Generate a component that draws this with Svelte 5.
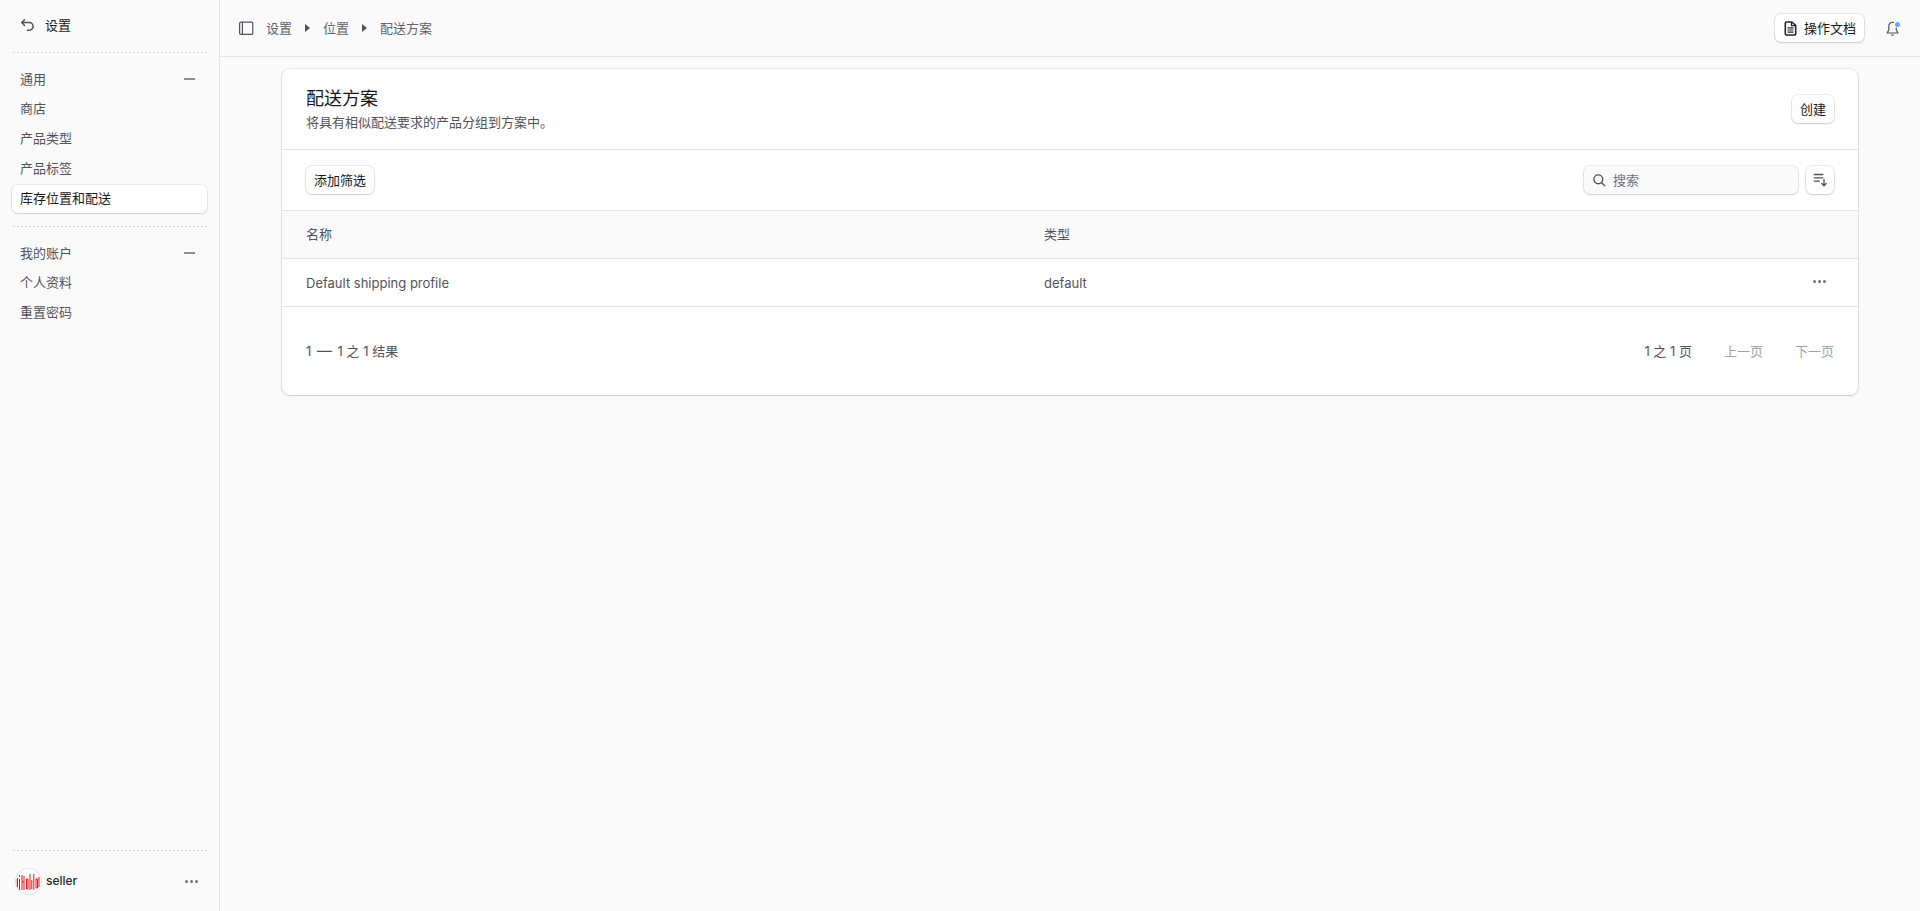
<script>
  const general = ['商店', '产品类型', '产品标签', '库存位置和配送'];
  const account = ['个人资料', '重置密码'];
  const crumbs = ['设置', '位置', '配送方案'];
</script>

<div class="shell">
  <aside class="sidebar">
    <div class="back">
      <svg width="15" height="15" viewBox="0 0 15 15" fill="none" stroke="#52525b" stroke-width="1.5" stroke-linecap="round" stroke-linejoin="round">
        <path d="M4.5 1.800 1.800 4.600l2.700 2.800" />
        <path d="M2 4.600h7.300a3.800 3.800 0 0 1 0 7.600H7.500" />
      </svg>
      <span>设置</span>
    </div>
    <div class="dots"></div>

    <div class="group-title"><span>通用</span><i class="minus"></i></div>
    <nav>
      {#each general as item, i}
        <div class="link" class:active={i === 3}>{item}</div>
      {/each}
    </nav>
    <div class="dots second"></div>

    <div class="group-title"><span>我的账户</span><i class="minus"></i></div>
    <nav>
      {#each account as item}
        <div class="link">{item}</div>
      {/each}
    </nav>

    <div class="user-wrap">
      <div class="dots"></div>
      <div class="user">
        <div class="avatar">
          <svg width="27" height="27" viewBox="0 0 27 27">
            <rect x="0.500" y="11" width="1.500" height="8" fill="#f5c9a8" />
            <path fill="none" stroke="#f01010" stroke-width="1" d="M2.500 10v9M4.500 7v2M4.500 11v11M7 7v15M9 8v14M7 14h2M11.500 11v10h1.500V11h-1.500M15 6v16M16.800 12v9M18.800 6v16M21 11v9h1.500v-9H21M24 9v10" />
          </svg>
        </div>
        <span class="user-name">seller</span>
        <span class="more"><i></i><i></i><i></i></span>
      </div>
    </div>
  </aside>

  <div class="main">
    <header class="topbar">
      <svg class="panel" width="15" height="15" viewBox="0 0 15 15" fill="none" stroke="#52525b" stroke-width="1.200">
        <rect x="0.600" y="1.100" width="13.200" height="12.300" rx="1.400" />
        <path d="M3.400 1.500v11.500" />
      </svg>
      <div class="crumbs">
        {#each crumbs as c, i}
          {#if i > 0}<i class="arrow"></i>{/if}
          <span>{c}</span>
        {/each}
      </div>
      <div class="top-right">
        <div class="button docs">
          <svg width="15" height="15" viewBox="0 0 15 15" fill="none" stroke="#27272a" stroke-width="1.600" stroke-linejoin="round">
            <path d="M2.300 2.200a1.200 1.200 0 0 1 1.200-1.200h5.300l3.900 3.400v8.400a1.200 1.200 0 0 1-1.200 1.200H3.500a1.200 1.200 0 0 1-1.200-1.200Z" />
            <path stroke-width="1.200" d="M8.500 1v3.700h4M4.500 6.900h6M4.500 9h6M4.500 11.100h6" />
          </svg>
          <span>操作文档</span>
        </div>
        <div class="bell">
          <svg width="15" height="15" viewBox="0 0 15 15" fill="none" stroke="#52525b" stroke-width="1.200" stroke-linecap="round" stroke-linejoin="round">
            <path d="M8.500 1.300C5.500.9 3.800 3 3.800 5.400v3.400L2.200 12h10.800L11.200 8.800V7" />
            <path d="M6.800 14.200h1.500" />
          </svg>
          <i class="dot"></i>
        </div>
      </div>
    </header>

    <div class="content">
      <section class="card">
        <div class="card-head">
          <div>
            <h1>配送方案</h1>
            <p>将具有相似配送要求的产品分组到方案中。</p>
          </div>
          <div class="button">创建</div>
        </div>

        <div class="filters">
          <div class="button">添加筛选</div>
          <div class="filter-right">
            <div class="search">
              <svg width="15" height="15" viewBox="0 0 15 15" fill="none" stroke="#52525b" stroke-width="1.400" stroke-linecap="round">
                <circle cx="6.300" cy="6.300" r="4.400" />
                <path d="m9.700 9.700 3 3" />
              </svg>
              <span>搜索</span>
            </div>
            <div class="button square">
              <svg width="15" height="15" viewBox="0 0 15 15" fill="none" stroke="#52525b" stroke-width="1.300" stroke-linecap="round" stroke-linejoin="round">
                <path d="M1.200 1.500h8.600M1.200 4.800h8.600M1.200 8.200h5" />
                <path d="M11 6.500v6M8.800 10.500l2.200 2.200 2.200-2.200" />
              </svg>
            </div>
          </div>
        </div>

        <div class="row head">
          <div class="col-name">名称</div>
          <div class="col-type">类型</div>
        </div>
        <div class="row body">
          <div class="col-name">Default shipping profile</div>
          <div class="col-type">default</div>
          <span class="more row-more"><i></i><i></i><i></i></span>
        </div>

        <div class="pager">
          <span>1 <span class="dash">—</span> 1 之 1 结果</span>
          <div class="pager-right">
            <span>1 之 1 页</span>
            <span class="off">上一页</span>
            <span class="off">下一页</span>
          </div>
        </div>
      </section>
    </div>
  </div>
</div>

<style>
  :global(body) {
    margin: 0;
    background: #fafafa;
    font-family: Inter, "Noto Sans CJK SC", sans-serif;
    font-size: 13px;
    line-height: 20px;
    color: #52525b;
  }

  .shell {
    display: flex;
    height: 911px;
    overflow: hidden;
  }

  .sidebar {
    width: 219px;
    flex: none;
    display: flex;
    flex-direction: column;
    border-right: 1px solid #e4e4e7;
  }

  .back {
    display: flex;
    align-items: center;
    gap: 10px;
    height: 50px;
    padding: 0 0 2px 20px;
    color: #18181b;
  }

  .dots {
    height: 1px;
    margin: 0 12px;
    background-image: radial-gradient(circle, #d4d4d8 0.6px, transparent 0.7px);
    background-size: 4px 1px;
  }

  .dots.second {
    margin-top: 13px;
  }

  .group-title {
    display: flex;
    justify-content: space-between;
    align-items: center;
    height: 27px;
    margin-top: 12px;
    padding: 0 24px 1px 20px;
  }

  .minus {
    width: 11px;
    height: 1.500px;
    margin-top: 1px;
    background: #8e8e96;
  }

  nav {
    display: flex;
    flex-direction: column;
    gap: 2px;
    margin-top: 2px;
  }

  .link {
    height: 28px;
    margin: 0 12px;
    padding: 0 8px;
    line-height: 27px;
    border-radius: 6px;
  }

  .link.active {
    background: #fff;
    color: #18181b;
    box-shadow: 0 0 0 1px rgba(0, 0, 0, 0.06), 0 1px 2px rgba(0, 0, 0, 0.1);
  }

  .user-wrap {
    margin-top: auto;
  }

  .user {
    display: flex;
    align-items: center;
    height: 60px;
    padding: 0 21px 0 15px;
  }

  .avatar {
    width: 27px;
    height: 27px;
    border-radius: 50%;
    overflow: hidden;
    background: #fff;
    box-shadow: inset 0 0 0 1px #e4e4e7;
    margin-right: 4px;
  }

  .avatar svg {
    display: block;
  }

  .user-name {
    font-size: 12px;
    font-weight: 500;
    color: #27272a;
  }

  .more {
    margin-left: auto;
    display: flex;
    gap: 2px;
  }

  .more i {
    width: 3px;
    height: 3px;
    border-radius: 50%;
    background: #71717a;
  }

  .main {
    flex: 1;
    min-width: 0;
  }

  .topbar {
    display: flex;
    align-items: center;
    height: 56px;
    padding: 0 20px 0 19px;
    border-bottom: 1px solid #e4e4e7;
  }

  .crumbs {
    display: flex;
    align-items: center;
    gap: 13px;
    margin-left: 12px;
    color: #62626b;
  }

  .arrow {
    width: 0;
    height: 0;
    border-left: 5.500px solid #52525b;
    border-top: 4px solid transparent;
    border-bottom: 4px solid transparent;
  }

  .top-right {
    margin-left: auto;
    display: flex;
    align-items: center;
    gap: 21px;
  }

  .button {
    display: flex;
    align-items: center;
    height: 28px;
    padding: 0 8px;
    box-sizing: border-box;
    background: #fff;
    color: #18181b;
    border-radius: 6px;
    box-shadow: 0 0 0 1px rgba(0, 0, 0, 0.08), 0 1px 2px rgba(0, 0, 0, 0.12);
  }

  .docs {
    gap: 6px;
  }

  .bell {
    position: relative;
    width: 15px;
    height: 15px;
  }

  .bell svg {
    display: block;
  }

  .dot {
    position: absolute;
    top: 1px;
    right: 0.500px;
    width: 5px;
    height: 5px;
    border-radius: 50%;
    background: #60a5fa;
  }

  .content {
    max-width: 1576px;
    margin: 0 auto;
    padding: 12px;
  }

  .card {
    background: #fff;
    border-radius: 8px;
    box-shadow: 0 0 0 1px rgba(0, 0, 0, 0.08), 0 1px 2px rgba(0, 0, 0, 0.12);
  }

  .card-head {
    display: flex;
    justify-content: space-between;
    align-items: center;
    height: 80px;
    padding: 0 24px;
    border-bottom: 1px solid #e4e4e7;
  }

  h1 {
    margin: 0;
    font-size: 18px;
    font-weight: 400;
    line-height: 24px;
    color: #18181b;
  }

  p {
    margin: 1px 0 0;
  }

  .filters {
    display: flex;
    justify-content: space-between;
    align-items: center;
    height: 60px;
    padding: 0 24px;
    border-bottom: 1px solid #e4e4e7;
  }

  .filter-right {
    display: flex;
    gap: 8px;
  }

  .search {
    display: flex;
    align-items: center;
    gap: 6px;
    width: 214px;
    height: 28px;
    padding-left: 8px;
    box-sizing: border-box;
    background: #fafafa;
    border-radius: 6px;
    color: #71717a;
    box-shadow: 0 0 0 1px rgba(0, 0, 0, 0.08), 0 1px 2px rgba(0, 0, 0, 0.12);
  }

  .square {
    width: 28px;
    padding: 0;
    justify-content: center;
  }

  .row {
    display: flex;
    align-items: center;
    position: relative;
    height: 47px;
    border-bottom: 1px solid #e4e4e7;
    padding-left: 24px;
  }

  .row.head {
    height: 46px;
    padding-bottom: 1px;
    background: #fafafa;
  }

  .col-name {
    width: 738px;
  }

  .row-more {
    position: absolute;
    right: 32px;
    top: 21px;
  }

  .pager {
    display: flex;
    justify-content: space-between;
    align-items: center;
    height: 88px;
    padding: 0 24px;
  }

  .dash {
    display: inline-block;
    font-size: 15px;
    margin: 0 2px;
  }

  .pager-right {
    display: flex;
    gap: 32px;
  }

  .off {
    color: #a1a1aa;
  }
</style>
